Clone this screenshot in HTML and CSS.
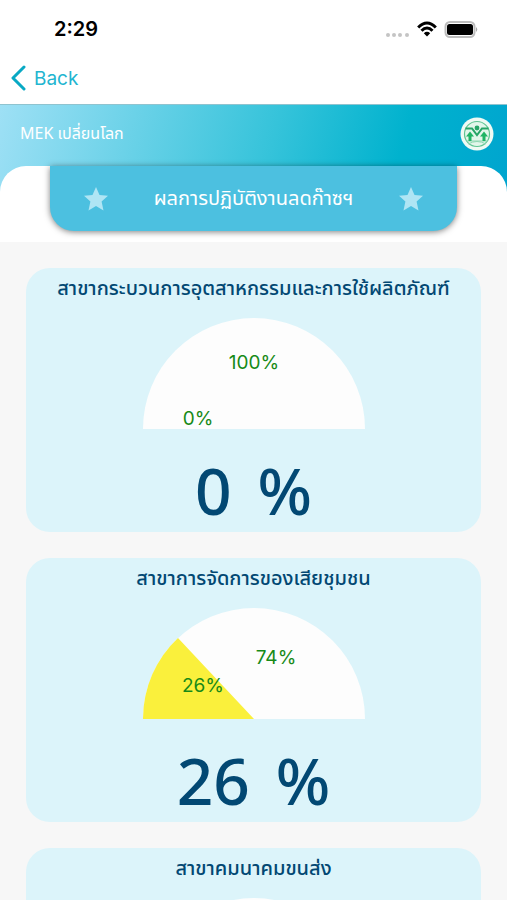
FILE: index.html
```html
<!DOCTYPE html>
<html lang="th">
<head>
    <meta charset="UTF-8">
    <meta name="viewport" content="width=device-width, initial-scale=1.0">
    <title>MEK เปลี่ยนโลก</title>
    <link rel="stylesheet" href="styles.css">
</head>
<body>
    <!-- Status bar -->
    <div class="status-bar">
        <span class="time">2:29</span>
        <div class="status-icons">
            <svg class="signal" width="24" height="18" viewBox="0 0 24 18" fill="#c4c4c4">
                <circle cx="2" cy="15" r="2"/>
                <circle cx="8" cy="15" r="2"/>
                <circle cx="14" cy="15" r="2"/>
                <circle cx="21" cy="15" r="2"/>
            </svg>
            <svg class="wifi" width="20" height="18" viewBox="0 0 20 18" fill="none" stroke="#000" stroke-width="3">
                <path d="M1.200 7.500 Q10 -1.500 18.800 7.500"/>
                <path d="M4.500 10.800 Q10 5.200 15.500 10.800"/>
                <path d="M10 16.500 L6.800 13.200 Q10 10.400 13.200 13.200 Z" fill="#000" stroke="none"/>
            </svg>
            <svg class="battery" width="34" height="18" viewBox="0 0 34 18">
                <rect x="1.500" y="2" width="29" height="15" rx="4.500" fill="#fff" stroke="#bdbdbd" stroke-width="2"/>
                <rect x="3" y="4" width="26" height="11" rx="2.500" fill="#000"/>
                <path d="M32 7 Q34.500 9.500 32 12 Z" fill="#aaa"/>
            </svg>
        </div>
    </div>

    <!-- Navigation -->
    <nav class="nav">
        <a class="back" href="#">
            <svg width="16" height="26" viewBox="0 0 16 26" fill="none" stroke="#08a9c4" stroke-width="3" stroke-linecap="round" stroke-linejoin="round">
                <path d="M13 2 L2 13 L13 24"/>
            </svg>
            Back
        </a>
    </nav>

    <!-- Header -->
    <header class="header">
        <div class="brand">
            <span>MEK เปลี่ยนโลก</span>
            <svg class="logo" width="34" height="34" viewBox="0 0 34 34">
                <circle cx="17" cy="17" r="16.500" fill="#effaf4"/>
                <circle cx="17" cy="17" r="12.500" fill="#e2f6ea" stroke="#5fc492" stroke-width="1.200"/>
                <path d="M6 24 H28 M8 27 Q17 22 26 27" fill="none" stroke="#8fd6b2"/>
                <path d="M5.500 11.500 H12 L17 18 L22 11.500 H28.500" fill="none" stroke="#27a567" stroke-width="2"/>
                <circle cx="17" cy="11" r="2.400" fill="#27a567"/>
                <path d="M10 14.500 L14 19.500 H11.500 V24 H8.500 V19.500 H6 Z M24 14.500 L28 19.500 H25.500 V24 H22.500 V19.500 H20 Z" fill="#20b465"/>
            </svg>
        </div>
        <div class="panel">
            <div class="banner">
                <svg class="star" width="26" height="26" viewBox="0 0 26 26">
                    <path d="M13 1 L16.500 9 L25 9.800 L18.600 15.500 L20.500 24.500 L13 20 L5.500 24.500 L7.400 15.500 L1 9.800 L9.500 9 Z"/>
                </svg>
                <h1>ผลการปฏิบัติงานลดก๊าซฯ</h1>
                <svg class="star" width="26" height="26" viewBox="0 0 26 26">
                    <path d="M13 1 L16.500 9 L25 9.800 L18.600 15.500 L20.500 24.500 L13 20 L5.500 24.500 L7.400 15.500 L1 9.800 L9.500 9 Z"/>
                </svg>
            </div>
        </div>
    </header>

    <!-- Sector cards -->
    <main class="cards">
        <section class="card">
            <h2>สาขากระบวนการอุตสาหกรรมและการใช้ผลิตภัณฑ์</h2>
            <svg class="gauge" width="222" height="111" viewBox="0 0 222 111">
                <path class="rest" d="M0 111 A111 111 0 0 1 222 111 Z"/>
                <text x="111" y="51">100%</text>
                <text x="55" y="107">0%</text>
            </svg>
            <p class="value"><span>0</span><span>%</span></p>
        </section>

        <section class="card">
            <h2>สาขาการจัดการของเสียชุมชน</h2>
            <svg class="gauge" width="222" height="111" viewBox="0 0 222 111">
                <path class="rest" d="M0 111 A111 111 0 0 1 222 111 Z"/>
                <path class="done" d="M111 111 L0 111 A111 111 0 0 1 35 30 Z"/>
                <text x="133" y="56">74%</text>
                <text x="60" y="84">26%</text>
            </svg>
            <p class="value"><span>26</span><span>%</span></p>
        </section>

        <section class="card">
            <h2>สาขาคมนาคมขนส่ง</h2>
            <svg class="gauge" width="222" height="111" viewBox="0 0 222 111">
                <path class="rest" d="M0 111 A111 111 0 0 1 222 111 Z"/>
            </svg>
        </section>
    </main>
</body>
</html>
```
FILE: styles.css
```css
* {
    box-sizing: border-box;
}

body {
    margin: 0;
    height: 100vh;
    display: flex;
    flex-direction: column;
    overflow: hidden;
    font-family: "Noto Sans Thai", Kanit, Prompt, Inter, "Noto Sans", sans-serif;
    background-color: #fff;
}

h1, h2, p {
    margin: 0;
    font-weight: 500;
}

svg {
    display: block;
    flex-shrink: 0;
}

/* Status bar */
.status-bar {
    height: 58px;
    padding: 0 29px 0 54px;
    display: flex;
    justify-content: space-between;
    align-items: center;
    flex-shrink: 0;
}

.time {
    font-family: Inter, sans-serif;
    font-size: 20px;
    font-weight: 600;
}

.status-icons {
    display: flex;
    gap: 7px;
}

/* Navigation */
.nav {
    height: 46px;
    padding: 0 11px 6px;
    display: flex;
    align-items: center;
    flex-shrink: 0;
}

.back {
    display: flex;
    align-items: center;
    gap: 7px;
    font-family: Inter, sans-serif;
    font-size: 19px;
    color: #22b5d0;
    text-decoration: none;
}

/* Header */
.header {
    flex-shrink: 0;
    border-top: 1px solid #8fc3cf;
    background: linear-gradient(105deg, #9ee0f5 0%, #35c3da 52%, #00b2ce 76%, #00a3cf 100%);
}

.brand {
    height: 61px;
    padding: 0 13px 4px 20px;
    display: flex;
    justify-content: space-between;
    align-items: center;
    font-size: 16px;
    color: #fff;
}

.panel {
    height: 76px;
    padding: 0 50px;
    border-radius: 26px 26px 0 0;
    background-color: #fff;
}

.banner {
    height: 65px;
    padding: 0 33px;
    display: flex;
    justify-content: space-between;
    align-items: center;
    border-radius: 0 0 24px 24px;
    background-color: #4cc0e0;
    box-shadow: 0 1px 6px rgba(0, 0, 0, 0.5);
    color: #fff;
}

.banner h1 {
    font-size: 20px;
    font-weight: 400;
}

.star {
    fill: #afe5f4;
}

/* Cards */
.cards {
    flex: 1;
    min-height: 0;
    padding: 26px;
    overflow-y: auto;
    scrollbar-width: none;
    background-color: #f7f7f7;
}

.card {
    height: 264px;
    margin-bottom: 26px;
    padding-top: 6px;
    display: flex;
    flex-direction: column;
    align-items: center;
    border-radius: 24px;
    background-color: #dcf4fa;
    color: #024873;
}

.card h2 {
    font-size: 20px;
    line-height: 30px;
    white-space: nowrap;
}

.gauge {
    margin-top: 14px;
}

.gauge .rest {
    fill: #fdfdfd;
}

.gauge .done {
    fill: #faf03c;
}

.gauge text {
    font-family: Inter, sans-serif;
    font-size: 19px;
    text-anchor: middle;
    fill: #178a17;
}

.value {
    margin-top: 24px;
    display: flex;
    gap: 26px;
    font-family: "Noto Sans", sans-serif;
    font-size: 64px;
    line-height: 76px;
}
```
